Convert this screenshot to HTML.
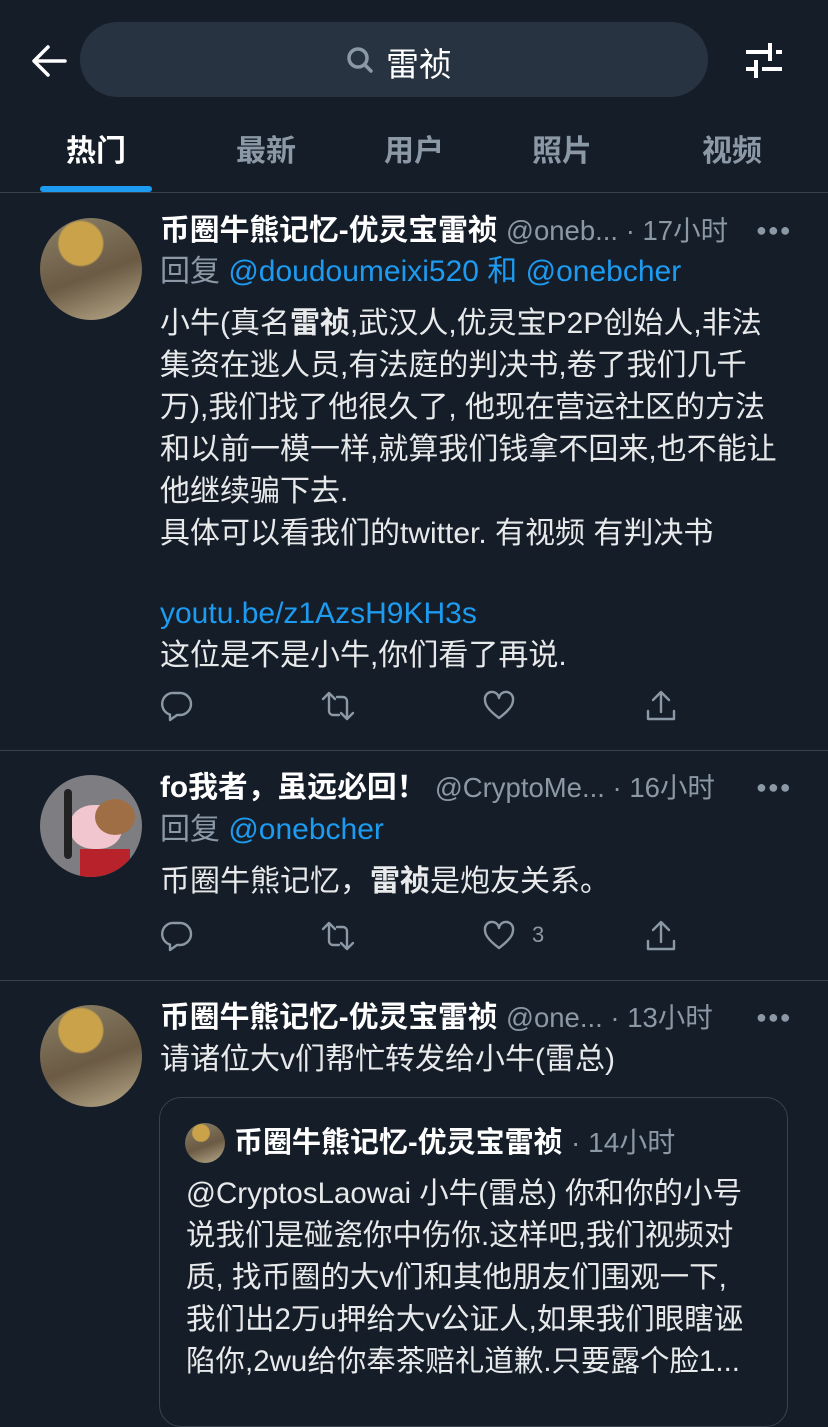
<!DOCTYPE html>
<html><head><meta charset="utf-8"><style>
*{margin:0;padding:0;box-sizing:border-box}
body{width:828px;height:1401px;background:#151d28;overflow:hidden;position:relative;font-family:"Liberation Sans","Noto Sans CJK SC",sans-serif;color:#e7e9ea}
.a{position:absolute;white-space:nowrap}
.t{font-size:30px;line-height:42px}
.g{color:#8b98a5}
.h{font-size:27.5px}
.b{color:#1d9bf0}
.n{font-weight:bold;color:#fff;font-size:29.8px}
.hr{position:absolute;left:0;width:828px;height:1px;background:#38444d}
.av{position:absolute;border-radius:50%;overflow:hidden}
.ic{position:absolute;fill:none;stroke:#8b98a5;stroke-width:2.4;stroke-linecap:round;stroke-linejoin:round}
.dots{position:absolute;color:#8b98a5;font-size:18px;letter-spacing:1px}
</style></head><body>
<!-- header -->
<svg class="a" style="left:30px;top:42px" width="38" height="38" viewBox="0 0 38 38"><path d="M35 19H5M18 5L4 19l14 14" fill="none" stroke="#fff" stroke-width="3.5" stroke-linecap="round" stroke-linejoin="round"/></svg>
<div class="a" style="left:80px;top:22px;width:628px;height:75px;border-radius:38px;background:#273340"></div>
<svg class="a" style="left:344px;top:44px" width="32" height="32" viewBox="0 0 32 32"><circle cx="14" cy="14" r="9" fill="none" stroke="#8b98a5" stroke-width="3.5"/><path d="M21 21l6 6" stroke="#8b98a5" stroke-width="3.5" stroke-linecap="round"/></svg>
<div class="a" style="left:386px;top:38px;font-size:33px;color:#fff">雷祯</div>
<svg class="a" style="left:744px;top:40px" width="40" height="40" viewBox="0 0 40 40"><path d="M2 12h24M32 12h6M26 3v18M2 29h10M18 29h20M12 20v18" stroke="#fff" stroke-width="4"/></svg>
<div class="a" style="left:66px;top:126px;font-size:30px;font-weight:bold;color:#fff">热门</div>
<div class="a" style="left:236px;top:126px;font-size:30px;font-weight:bold;color:#8b98a5">最新</div>
<div class="a" style="left:384px;top:126px;font-size:30px;font-weight:bold;color:#8b98a5">用户</div>
<div class="a" style="left:532px;top:126px;font-size:30px;font-weight:bold;color:#8b98a5">照片</div>
<div class="a" style="left:702px;top:126px;font-size:30px;font-weight:bold;color:#8b98a5">视频</div>
<div class="a" style="left:40px;top:186px;width:112px;height:6px;border-radius:3px;background:#1d9bf0"></div>
<div class="hr" style="top:192px"></div>

<!-- tweet 1 -->
<div class="av" style="left:40px;top:218px;width:102px;height:102px;background:radial-gradient(circle at 40% 25%,#c9a24a 0 22%,transparent 24%),linear-gradient(160deg,#8a8068,#6b5a44 55%,#b9ab8c)"></div>
<div class="a t" style="left:160px;top:210px"><span class="n">币圈牛熊记忆-优灵宝雷祯</span> <span class="g h">@oneb... · 17小时</span></div>
<div class="dots" style="left:756px;top:220px">●●●</div>
<div class="a t g" style="left:160px;top:251px">回复 <span class="b">@doudoumeixi520 和 @onebcher</span></div>
<div class="a t" style="left:160px;top:303px">小牛(真名<b>雷祯</b>,武汉人,优灵宝P2P创始人,非法</div>
<div class="a t" style="left:160px;top:345px">集资在逃人员,有法庭的判决书,卷了我们几千</div>
<div class="a t" style="left:160px;top:387px">万),我们找了他很久了, 他现在营运社区的方法</div>
<div class="a t" style="left:160px;top:429px">和以前一模一样,就算我们钱拿不回来,也不能让</div>
<div class="a t" style="left:160px;top:471px">他继续骗下去.</div>
<div class="a t" style="left:160px;top:513px">具体可以看我们的twitter. 有视频 有判决书</div>
<div class="a t b" style="left:160px;top:593px">youtu.be/z1AzsH9KH3s</div>
<div class="a t" style="left:160px;top:635px">这位是不是小牛,你们看了再说.</div>
<svg class="ic" style="left:160px;top:689px" width="34" height="34" viewBox="0 0 34 34"><path d="M14 4h6a11 11 0 0 1 0 22h-3l-7 5v-5.5A11 11 0 0 1 14 4z"/></svg>
<svg class="ic" style="left:320px;top:689px" width="36" height="34" viewBox="0 0 36 34"><path d="M9 4L3 10M9 4l6 6M9 4v18a4 4 0 0 0 4 4h6M27 30l-6-6M27 30l6-6M27 30V12a4 4 0 0 0-4-4h-6"/></svg>
<svg class="ic" style="left:482px;top:689px" width="34" height="34" viewBox="0 0 34 34"><path d="M17 29C5 20 3 15 3 11a7 7 0 0 1 14-2 7 7 0 0 1 14 2c0 4-2 9-14 18z"/></svg>
<svg class="ic" style="left:644px;top:689px" width="34" height="34" viewBox="0 0 34 34"><path d="M17 4v19M9 11l8-8 8 8M4 22v8h26v-8"/></svg>
<div class="hr" style="top:750px"></div>

<!-- tweet 2 -->
<div class="av" style="left:40px;top:775px;width:102px;height:102px;background:#7e7e82">
 <div style="position:absolute;left:30px;top:30px;width:52px;height:44px;border-radius:45%;background:#f2c6cf"></div>
 <div style="position:absolute;left:55px;top:24px;width:40px;height:36px;border-radius:50%;background:#a06e45"></div>
 <div style="position:absolute;left:40px;top:74px;width:50px;height:30px;background:#b8222a"></div>
 <div style="position:absolute;left:24px;top:14px;width:8px;height:70px;background:#222;border-radius:4px"></div>
</div>
<div class="a t" style="left:160px;top:767px"><span class="n">fo我者，虽远必回！</span> <span class="g h">@CryptoMe... · 16小时</span></div>
<div class="dots" style="left:756px;top:777px">●●●</div>
<div class="a t g" style="left:160px;top:809px">回复 <span class="b">@onebcher</span></div>
<div class="a t" style="left:160px;top:861px">币圈牛熊记忆，<b>雷祯</b>是炮友关系。</div>
<svg class="ic" style="left:160px;top:919px" width="34" height="34" viewBox="0 0 34 34"><path d="M14 4h6a11 11 0 0 1 0 22h-3l-7 5v-5.5A11 11 0 0 1 14 4z"/></svg>
<svg class="ic" style="left:320px;top:919px" width="36" height="34" viewBox="0 0 36 34"><path d="M9 4L3 10M9 4l6 6M9 4v18a4 4 0 0 0 4 4h6M27 30l-6-6M27 30l6-6M27 30V12a4 4 0 0 0-4-4h-6"/></svg>
<svg class="ic" style="left:482px;top:919px" width="34" height="34" viewBox="0 0 34 34"><path d="M17 29C5 20 3 15 3 11a7 7 0 0 1 14-2 7 7 0 0 1 14 2c0 4-2 9-14 18z"/></svg>
<div class="a g" style="left:532px;top:922px;font-size:22px">3</div>
<svg class="ic" style="left:644px;top:919px" width="34" height="34" viewBox="0 0 34 34"><path d="M17 4v19M9 11l8-8 8 8M4 22v8h26v-8"/></svg>
<div class="hr" style="top:980px"></div>

<!-- tweet 3 -->
<div class="av" style="left:40px;top:1005px;width:102px;height:102px;background:radial-gradient(circle at 40% 25%,#c9a24a 0 22%,transparent 24%),linear-gradient(160deg,#8a8068,#6b5a44 55%,#b9ab8c)"></div>
<div class="a t" style="left:160px;top:997px"><span class="n">币圈牛熊记忆-优灵宝雷祯</span> <span class="g h">@one... · 13小时</span></div>
<div class="dots" style="left:756px;top:1007px">●●●</div>
<div class="a t" style="left:160px;top:1039px">请诸位大v们帮忙转发给小牛(雷总)</div>
<div class="a" style="left:159px;top:1097px;width:629px;height:330px;border:1.5px solid #38444d;border-radius:22px"></div>
<div class="av" style="left:185px;top:1123px;width:40px;height:40px;background:radial-gradient(circle at 40% 25%,#c9a24a 0 22%,transparent 24%),linear-gradient(160deg,#8a8068,#6b5a44 55%,#b9ab8c)"></div>
<div class="a t" style="left:234px;top:1122px"><span class="n" style="font-size:29px">币圈牛熊记忆-优灵宝雷祯</span> <span class="g" style="font-size:28px">· 14小时</span></div>
<div class="a t" style="left:186px;top:1173px;font-size:29.5px">@CryptosLaowai 小牛(雷总) 你和你的小号</div>
<div class="a t" style="left:186px;top:1215px;font-size:29.5px">说我们是碰瓷你中伤你.这样吧,我们视频对</div>
<div class="a t" style="left:186px;top:1257px;font-size:29.5px">质, 找币圈的大v们和其他朋友们围观一下,</div>
<div class="a t" style="left:186px;top:1299px;font-size:29.5px">我们出2万u押给大v公证人,如果我们眼瞎诬</div>
<div class="a t" style="left:186px;top:1341px;font-size:29.5px">陷你,2wu给你奉茶赔礼道歉.只要露个脸1...</div>
</body></html>
